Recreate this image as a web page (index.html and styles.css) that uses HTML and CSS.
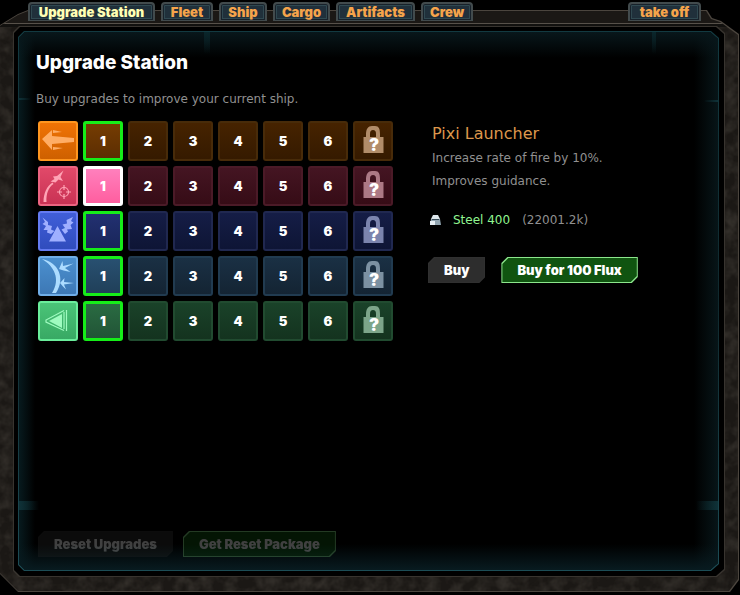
FILE: index.html
```html
<!DOCTYPE html>
<html lang="en">
<head>
<meta charset="utf-8">
<meta name="viewport" content="width=device-width, initial-scale=1">
<title>Upgrade Station</title>
<link rel="stylesheet" href="styles.css">
</head>
<body>
<svg class="defs" width="0" height="0" aria-hidden="true">
  <symbol id="lock" viewBox="0 0 36 36">
    <path d="M8.500 14h2.500v-3C11 6 13 3 17 3h3c4 0 5 3 5 8v3h3.500v16h-20zM15 14h6v-3c0-3-1-4-3-4s-3 1-3 4z" fill-rule="evenodd"/>
  </symbol>
</svg>
<nav class="tabs">
  <a class="tab active" href="#upgrade">Upgrade Station</a>
  <a class="tab" href="#fleet">Fleet</a>
  <a class="tab" href="#ship">Ship</a>
  <a class="tab" href="#cargo">Cargo</a>
  <a class="tab" href="#artifacts">Artifacts</a>
  <a class="tab" href="#crew">Crew</a>
  <a class="tab leave" href="#space">take off</a>
</nav>
<div class="edge">
<div class="hull">
  <svg class="grain" aria-hidden="true">
    <filter id="rust" x="0" y="0" width="100%" height="100%"><feTurbulence type="fractalNoise" baseFrequency="0.08" numOctaves="3" seed="4"/><feColorMatrix values="0 0 0 0 0.26  0 0 0 0 0.23  0 0 0 0 0.19  1.2 0 0 0 -0.4"/></filter>
    <rect width="100%" height="100%" filter="url(#rust)"/>
  </svg>
  <div class="rim">
  <div class="well">
  <div class="glow">
  <main class="screen">
    <i class="trace trace-a"></i><i class="trace trace-b"></i><i class="trace trace-c"></i><i class="trace trace-d"></i>
    <i class="trace trace-e"></i><i class="trace trace-f"></i>
    <h1>Upgrade Station</h1>
    <p class="intro">Buy upgrades to improve your current ship.</p>
    <div class="columns">
      <section class="upgrades" aria-label="Upgrades">
        <div class="row orange">
          <svg class="tile icon" viewBox="0 0 36 36" aria-hidden="true"><path d="M2 16 12 7v6l22 2v4l-22 2v6zM13 7l9 2-9 1zM13 24l10 1-10 2z"/></svg>
          <button class="tile owned">1</button><button class="tile">2</button><button class="tile">3</button><button class="tile">4</button><button class="tile">5</button><button class="tile">6</button>
          <button class="tile locked" aria-label="Locked"><svg viewBox="0 0 36 36"><use href="#lock"/></svg><span>?</span></button>
        </div>
        <div class="row red">
          <svg class="tile icon" viewBox="0 0 36 36" aria-hidden="true"><path d="M23.500 2.500 20.500 9 23 13 18.500 11.500 15.500 14.500 10.500 13.500 14.500 11 13 8.500 17 8zM13.500 16C8.500 19 6 26 6.500 34H3.500C3.500 25 7 18 12.500 14.500z"/><g class="line"><circle cx="24" cy="24" r="4.500"/><path d="M24 17v5M24 26v5M17 24h5M26 24h5"/></g></svg>
          <button class="tile selected" aria-pressed="true">1</button><button class="tile">2</button><button class="tile">3</button><button class="tile">4</button><button class="tile">5</button><button class="tile">6</button>
          <button class="tile locked" aria-label="Locked"><svg viewBox="0 0 36 36"><use href="#lock"/></svg><span>?</span></button>
        </div>
        <div class="row blue">
          <svg class="tile icon" viewBox="0 0 36 36" aria-hidden="true"><path d="M17.500 13 26 28.500H9zM2.500 4.500 8 9 8 12 12 13 11 16.500 14.500 18 11 21 7 19.500 7.500 17 3.500 17 6 13 2.500 11 5 9zM33 4 26.500 7 27 10.500 22.500 11.500 25 15 21.500 16.500 25 21 28 18.500 27 16.500 32 16 30.500 12 33.500 9.500 31 8z"/></svg>
          <button class="tile owned">1</button><button class="tile">2</button><button class="tile">3</button><button class="tile">4</button><button class="tile">5</button><button class="tile">6</button>
          <button class="tile locked" aria-label="Locked"><svg viewBox="0 0 36 36"><use href="#lock"/></svg><span>?</span></button>
        </div>
        <div class="row cyan">
          <svg class="tile icon" viewBox="0 0 36 36" aria-hidden="true"><path d="M2 1C18 4 26 20 16 35h-4C21 21 14 8 2 1zM19 11l3.500-8 .5 5L33.500 5.500 25 10l5.500 4-7-1.500zM20 25l4.500-5-.5 4 10 1-10 1.500 2 5-3-3z"/></svg>
          <button class="tile owned">1</button><button class="tile">2</button><button class="tile">3</button><button class="tile">4</button><button class="tile">5</button><button class="tile">6</button>
          <button class="tile locked" aria-label="Locked"><svg viewBox="0 0 36 36"><use href="#lock"/></svg><span>?</span></button>
        </div>
        <div class="row green">
          <svg class="tile icon" viewBox="0 0 36 36" aria-hidden="true"><path d="M9 18 22 11v14z"/><path class="line" d="M24 7.500 6 17v2l18 8.500M24 9v17M26.500 7v21"/></svg>
          <button class="tile owned">1</button><button class="tile">2</button><button class="tile">3</button><button class="tile">4</button><button class="tile">5</button><button class="tile">6</button>
          <button class="tile locked" aria-label="Locked"><svg viewBox="0 0 36 36"><use href="#lock"/></svg><span>?</span></button>
        </div>
      </section>
      <section class="details">
        <h2>Pixi Launcher</h2>
        <p>Increase rate of fire by 10%.</p>
        <p>Improves guidance.</p>
        <div class="cost">
          <svg width="11" height="10" viewBox="0 0 11 10" aria-hidden="true"><path d="M3 0h5l2 4H1z" fill="#dce6ec"/><path d="M1 4h9l1 6H0z" fill="#91a5b1"/><path d="M0 6h5v4H0z" fill="#e5eef3"/><path d="M2 4h7v1H2z" fill="#344854"/></svg>
          <span class="have">Steel 400</span>
          <span>(22001.2k)</span>
        </div>
        <div class="actions">
          <button class="btn"><span>Buy</span></button>
          <button class="btn flux"><span>Buy for 100 Flux</span></button>
        </div>
      </section>
    </div>
    <div class="footer">
      <button class="btn" disabled><span>Reset Upgrades</span></button>
      <button class="btn flux" disabled><span>Get Reset Package</span></button>
    </div>
  </main>
  </div>
  </div>
  </div>
</div>
</div>
</body>
</html>
```

FILE: styles.css
```css
* { box-sizing: border-box; }

body {
  margin: 0;
  min-height: 100vh;
  padding: 2px 1px 3px 0;
  display: flex;
  flex-direction: column;
  background: #000;
  color: #909090;
  font: 12px/16px "DejaVu Sans", sans-serif;
}

.defs { position: absolute; }
h1, h2, p { margin: 0; }

.tabs, .tile, .btn, h1 {
  font-family: Inter, "Open Sans", sans-serif;
  font-weight: 800;
}

/* Tabs sit over the top edge of the hull */
.tabs {
  position: relative;
  z-index: 1;
  display: grid;
  grid-template-columns: 127px 52px 48px 57px 79px 52px 1fr;
  column-gap: 6px;
  padding: 0 38px 0 28px;
}
.tab {
  height: 19px;
  border: 2px solid #424b4d;
  border-bottom-width: 1px;
  border-radius: 4px 4px 0 0;
  background: #20303b;
  box-shadow: inset 0 0 0 1px #17212a, inset 0 0 0 2px #304951;
  color: #f5a44b;
  font-size: 13px;
  font-weight: 900;
  line-height: 16px;
  text-align: center;
  text-decoration: none;
  white-space: nowrap;
}
.tab.active { color: #ffffb4; }
.tab.leave { width: 73px; justify-self: end; }

/* Metal hull */
.edge, .hull {
  flex: 1;
  display: flex;
  clip-path: polygon(28px 0, calc(100% - 32px) 0, calc(100% - 27px) 8px, calc(100% - 18px) 11px, 100% 24px, 100% calc(100% - 12px), calc(100% - 9px) 100%, 18px 100%, 0 calc(100% - 18px), 0 15px, 18px 4px);
}
.edge { margin-top: -11px; padding: 1px 1px 1px 0; background: #4b453e; }
.hull {
  position: relative;
  padding: 15px 13px 14px;
  background:
    linear-gradient(#0000 12px, #57514a 12px, #57514a 13px, #12110f 13px, #12110f 16px, #0000 16px),
    #1b1815;
}
.grain { position: absolute; inset: 16px 0 0; width: 100%; height: calc(100% - 16px); opacity: .35; }
.rim, .well, .glow, .screen {
  flex: 1;
  display: flex;
  position: relative;
  clip-path: polygon(6px 0, calc(100% - 8px) 0, 100% 7px, 100% calc(100% - 7px), calc(100% - 8px) 100%, 6px 100%, 0 calc(100% - 6px), 0 6px);
}
.rim { padding: 1px; background: #38342f; }
.well { padding: 4px 5px 5px 4px; background: #000; }
.glow { padding: 1px; background: linear-gradient(#123a41, #10292e 50%, #1c4d56); }
.screen {
  flex-direction: column;
  padding: 19px 16px 13px 17px;
  background:
    linear-gradient(#08171b, #0000 26px),
    linear-gradient(to top, #081b20, #0000 26px),
    linear-gradient(to right, #071a1e, #0000 16px),
    linear-gradient(to left, #071518, #0000 24px),
    #000;
}
.trace { position: absolute; background: linear-gradient(to right, #0f3238, #0000); }
.trace-a { left: 0; bottom: 60px; width: 20px; height: 9px; }
.trace-b { right: 0; bottom: 60px; width: 22px; height: 9px; transform: rotate(180deg); }
.trace-c { left: 185px; top: 0; width: 6px; height: 22px; background: linear-gradient(#0a262b, #0000); }
.trace-d { right: 62px; top: 0; width: 4px; height: 22px; background: linear-gradient(#0a262b, #0000); }
.trace-e { left: 0; top: 66px; width: 12px; height: 2px; }
.trace-f { right: 0; top: 68px; width: 14px; height: 2px; transform: rotate(180deg); }

h1 { color: #fff; font-size: 19px; line-height: 24px; }
.intro { margin-top: 16px; }
.columns { display: flex; align-items: flex-start; gap: 35px; margin: 14px 0 0 2px; }

/* Upgrade grid */
.upgrades { display: grid; gap: 5px; }
.row { display: flex; gap: 5px; }
.tile {
  position: relative;
  width: 40px;
  height: 40px;
  padding: 0;
  border: 2px solid var(--rim);
  border-radius: 3px;
  background: linear-gradient(var(--top), var(--low));
  color: #fff;
  font-size: 13px;
  font-weight: 900;
  line-height: 36px;
}
.orange { --rim: #482b09; --top: #462300; --low: #351a00; --on: #753c02; --on-low: #5c2e02; --icon: #f07305; --icon-low: #ce6000; --icon-rim: #ff961f; --glyph: #ffad65; --lock: #b18c69; }
.red { --rim: #4b1a27; --top: #441522; --low: #360c16; --icon: #e14969; --icon-low: #c93254; --icon-rim: #ec6481; --glyph: #ffa4b5; --lock: #ac7985; }
.blue { --rim: #202850; --top: #151d46; --low: #0e1535; --on: #223071; --on-low: #19265a; --icon: #405ed8; --icon-low: #304cbd; --icon-rim: #647bf1; --glyph: #9fafff; --lock: #7b84ad; }
.cyan { --rim: #213b50; --top: #1a3044; --low: #142433; --on: #285071; --on-low: #203f59; --icon: #4b90cf; --icon-low: #3d78b5; --icon-rim: #70aee8; --glyph: #acdcff; --lock: #7c91a2; }
.green { --rim: #214b30; --top: #1a4229; --low: #14331f; --on: #2a6b42; --on-low: #215436; --icon: #4ac478; --icon-low: #38a964; --icon-rim: #6aed9b; --glyph: #9ffbc0; --lock: #7da58a; }
.icon { --rim: var(--icon-rim); --top: var(--icon); --low: var(--icon-low); fill: var(--glyph); }
.line { fill: none; stroke: var(--glyph); stroke-width: 1.2; }
.owned { --rim: #16ed19; --top: var(--on); --low: var(--on-low); }
.selected { --rim: #fff; --top: #ff80bd; --low: #ff5e9f; }
.owned, .selected { border-width: 3px; line-height: 34px; }
.locked svg { display: block; width: 36px; height: 36px; fill: var(--lock); }
.locked span { position: absolute; inset: 4px 0 0 2px; font-size: 17px; line-height: 36px; }

/* Selected upgrade */
.details { padding-top: 3px; }
.details h2, .details p { padding-left: 4px; }
h2 { color: #dd974c; font-size: 16px; font-weight: 400; line-height: 20px; }
.details p { margin-top: 7px; }
.details h2 + p { margin-top: 6px; }
.cost { display: flex; align-items: center; gap: 12px; margin: 23px 0 0 2px; }
.have { color: #91f591; }
.actions, .footer { display: flex; }
.actions { gap: 16px; margin-top: 29px; }
.footer { gap: 10px; margin: auto 0 0 2px; }

.btn {
  --cut: polygon(6px 0, 100% 0, 100% calc(100% - 6px), calc(100% - 6px) 100%, 0 100%, 0 6px);
  height: 26px;
  padding: 1px;
  border: 0;
  background: #303030;
  clip-path: var(--cut);
  color: #fff;
  font-size: 13px;
  font-weight: 900;
}
.btn span {
  display: block;
  padding: 0 15px;
  background: #2d2d2d;
  clip-path: var(--cut);
  line-height: 24px;
}
.btn.flux { background: #8ce68c; }
.flux span { background: #105410; }
.btn:disabled { opacity: .25; }
```
